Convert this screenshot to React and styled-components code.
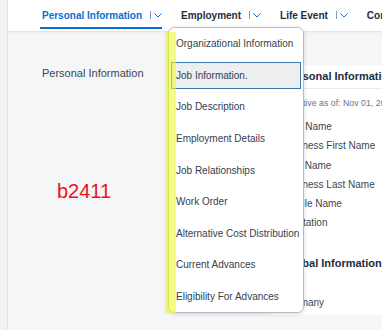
import React from "react";
import styled, { createGlobalStyle } from "styled-components";

const GlobalStyle = createGlobalStyle`
  html, body {
    margin: 0;
    padding: 0;
    background: #f5f6f7;
    font-family: "Liberation Sans", Arial, sans-serif;
  }
  #root {
    height: 330px;
  }
`;

const tabs = [
  { label: "Personal Information", active: true },
  { label: "Employment" },
  { label: "Life Event" },
  { label: "Compensation" },
];

const menuItems = [
  "Organizational Information",
  "Job Information.",
  "Job Description",
  "Employment Details",
  "Job Relationships",
  "Work Order",
  "Alternative Cost Distribution",
  "Current Advances",
  "Eligibility For Advances",
];

const fields = [
  "First Name",
  "Business First Name",
  "Last Name",
  "Business Last Name",
  "Middle Name",
  "Salutation",
];

const Chevron = ({ color }) => (
  <svg width="8" height="5" viewBox="0 0 8 5" fill="none">
    <polyline points="0.5,0.5 4,4 7.5,0.5" stroke={color} strokeWidth="1" />
  </svg>
);

const App = () => (
  <>
    <GlobalStyle />
    <Page>
      <Gutter />
      <Main>
        <TabBar>
          {tabs.map((t) => (
            <Tab key={t.label} $active={t.active}>
              <TabLabel $active={t.active}>{t.label}</TabLabel>
              <Separator $active={t.active} />
              <Chevron color="#0a6ed1" />
            </Tab>
          ))}
        </TabBar>
        <Content>
          <SidePanel>
            <SideLabel>Personal Information</SideLabel>
            <Stamp>b2411</Stamp>
          </SidePanel>
          <Card>
            <CardTitle>Personal Information</CardTitle>
            <Effective>Effective as of: Nov 01, 2023</Effective>
            {fields.map((f) => (
              <FieldRow key={f}>{f}</FieldRow>
            ))}
            <SectionTitle>Global Information</SectionTitle>
            <FieldRow>Germany</FieldRow>
          </Card>
        </Content>
      </Main>
      <Menu>
        {menuItems.map((m, i) => (
          <MenuItem key={m} $focused={i === 1}>
            {m}
          </MenuItem>
        ))}
      </Menu>
      <Highlight />
    </Page>
  </>
);

const Page = styled.div`
  position: relative;
  display: flex;
  height: 330px;
  overflow: hidden;
`;

const Gutter = styled.div`
  width: 7px;
  flex: none;
  background: #f2f3f4;
  border-right: 1px solid #e2e5e8;
`;

const Main = styled.div`
  flex: 1;
  display: flex;
  flex-direction: column;
  min-width: 0;
  background: #f5f6f7;
`;

const TabBar = styled.div`
  height: 31px;
  flex: none;
  display: flex;
  gap: 17px;
  padding-left: 32px;
  background: #fff;
  box-shadow: 0 1px 0 #e4e6e9, 0 2px 3px rgba(0, 0, 0, 0.04);
  white-space: nowrap;
  overflow: hidden;
  position: relative;
  z-index: 1;
`;

const Tab = styled.div`
  height: 29px;
  box-sizing: border-box;
  padding: 3px 0 0 2px;
  display: flex;
  align-items: center;
  border-bottom: 2px solid ${(p) => (p.$active ? "#0a6ed1" : "transparent")};
`;

const TabLabel = styled.span`
  font-size: 10px;
  font-weight: bold;
  color: ${(p) => (p.$active ? "#0a6ed1" : "#1d2d3e")};
`;

const Separator = styled.span`
  width: 1px;
  height: 8px;
  margin: 0 3px 0 8px;
  background: ${(p) => (p.$active ? "#6f9fd8" : "#8a9bab")};
`;

const Content = styled.div`
  flex: 1;
  display: flex;
  padding-top: 34px;
`;

const SidePanel = styled.div`
  width: 262px;
  flex: none;
  padding-left: 34px;
  box-sizing: border-box;
`;

const SideLabel = styled.div`
  margin-top: 2px;
  font-size: 11px;
  color: #3a4653;
`;

const Stamp = styled.div`
  margin: 101px 0 0 15px;
  font-size: 20px;
  color: #ee1118;
`;

const Card = styled.div`
  flex: 1;
  height: 250px;
  background: #fff;
  padding: 0 0 0 13px;
  white-space: nowrap;
  overflow: hidden;
`;

const CardTitle = styled.div`
  height: 23px;
  line-height: 23px;
  font-size: 11px;
  font-weight: bold;
  color: #1d2d3e;
  margin-left: -13px;
  padding-left: 15px;
  border-bottom: 1px solid #e8eaec;
`;

const Effective = styled.div`
  margin-top: 9px;
  font-size: 8.8px;
  line-height: 11px;
  color: #6a7580;
`;

const FieldRow = styled.div`
  font-size: 10px;
  line-height: 19.3px;
  color: #3a4653;
  &:nth-of-type(3) {
    margin-top: 8px;
  }
`;

const SectionTitle = styled.div`
  margin: 23px 0 23px 1px;
  font-size: 11px;
  line-height: 14px;
  font-weight: bold;
  color: #1d2d3e;
`;

const Menu = styled.div`
  position: absolute;
  left: 168px;
  top: 27px;
  width: 136px;
  box-sizing: border-box;
  background: #fff;
  border: 1px solid #b3bcc5;
  border-radius: 7px;
  box-shadow: 0 1px 4px rgba(0, 0, 0, 0.16);
  z-index: 2;
  overflow: hidden;
`;

const MenuItem = styled.div`
  height: 31.6px;
  display: flex;
  align-items: center;
  padding-left: 7px;
  font-size: 10px;
  color: #34414e;
  white-space: nowrap;
  background: ${(p) => (p.$focused ? "#eceef0" : "#fff")};
  box-shadow: ${(p) =>
    p.$focused ? "inset 0 0 0 2px #fff, inset 0 0 0 3px #3c78ad" : "none"};
`;

const Highlight = styled.div`
  position: absolute;
  left: 165px;
  top: 32px;
  width: 11px;
  height: 282px;
  background: rgba(240, 248, 40, 0.58);
  z-index: 3;
  pointer-events: none;
`;

export default App;
